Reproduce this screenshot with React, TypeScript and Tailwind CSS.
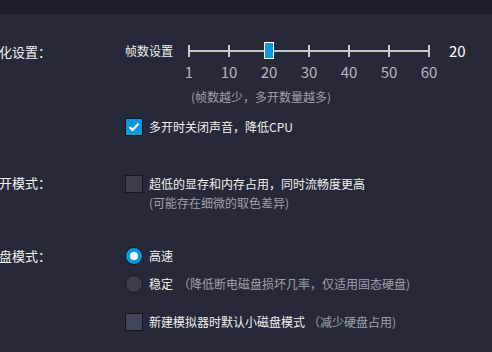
import React from 'react';

const font = { fontFamily: '"Noto Sans CJK SC", "Noto Sans", sans-serif' };

const ticks = [1, 10, 20, 30, 40, 50, 60];

const Checkbox = ({ checked, light }: { checked?: boolean; light?: boolean }) => (
    <div
        className={`w-[18px] h-[18px] shrink-0 border-[1.5px] border-[#15161c] flex items-center justify-center ${
            checked ? 'bg-[#0a98df]' : light ? 'bg-[#41455a]' : 'bg-[#3a3d4c]'
        }`}
    >
        {checked && (
            <svg width="12" height="10" viewBox="0 0 12 10">
                <path d="M1.5 5 L4.5 8 L10.5 1.8" fill="none" stroke="white" strokeWidth="2.2" />
            </svg>
        )}
    </div>
);

const Radio = ({ checked }: { checked?: boolean }) => (
    <div
        className={`w-[18px] h-[18px] shrink-0 rounded-full border-[1.5px] border-[#15161c] flex items-center justify-center ${
            checked ? 'bg-[#0a98df]' : 'bg-[#3a3d4c]'
        }`}
    >
        {checked && <div className="w-[8px] h-[8px] rounded-full bg-white"></div>}
    </div>
);

const Label = ({ text }: { text: string }) => (
    <div className="w-[51px] shrink-0 flex justify-end overflow-hidden whitespace-nowrap text-[13px] leading-[18px] text-[#f4f4f4]">
        <span>{text}</span>
    </div>
);

const App = () => {
    return (
        <div className="w-[492px] h-[352px] bg-[#262a38] overflow-hidden" style={font}>
            <div className="h-[14px] bg-[#1c1e26]"></div>

            {/* 帧数 */}
            <div className="flex items-start mt-[28px]">
                <div className="pt-[1px]">
                    <Label text="多开优化设置：" />
                </div>
                <div className="ml-[74px] flex flex-col">
                    <div className="flex items-center h-[17px]">
                        <div className="w-[63px] text-[12px] leading-[16px] text-[#f0f0f0]">帧数设置</div>
                        <div className="relative w-[242px] h-[17px]">
                            <div className="absolute left-0 right-0 top-[8px] h-[2px] bg-[#c8c8c8]"></div>
                            <div className="absolute inset-x-0 top-[3px] h-[12px] flex justify-between">
                                {ticks.map((t) => (
                                    <div key={t} className="w-[2px] h-[12px] bg-[#c8c8c8]"></div>
                                ))}
                            </div>
                            <div className="absolute left-[76px] top-0 w-[10px] h-[17px] bg-[#0a98df] border border-white"></div>
                        </div>
                        <div className="ml-[19px] text-[15px] leading-[16px] text-white">20</div>
                    </div>
                    <div className="flex ml-[44px] mt-[5px] h-[16px]">
                        {ticks.map((t) => (
                            <div key={t} className="w-[40px] text-center text-[15px] leading-[16px] text-[#b4b6bc]">
                                {t}
                            </div>
                        ))}
                    </div>
                    <div className="ml-[66px] mt-[9px] text-[12px] leading-[16px] text-[#9ea1aa] whitespace-nowrap">
                        (帧数越少，多开数量越多)
                    </div>
                    <div className="flex items-center gap-[6px] mt-[13px]">
                        <Checkbox checked />
                        <span className="text-[12px] leading-[16px] text-[#f0f0f0] whitespace-nowrap">多开时关闭声音，降低CPU</span>
                    </div>
                </div>
            </div>

            {/* 低配模式 */}
            <div className="flex items-start mt-[39px]">
                <div className="-mt-[1px]">
                    <Label text="极速多开模式：" />
                </div>
                <div className="ml-[74px] flex flex-col">
                    <div className="flex items-center gap-[6px]">
                        <Checkbox />
                        <span className="text-[12px] leading-[16px] text-[#f0f0f0] whitespace-nowrap">
                            超低的显存和内存占用，同时流畅度更高
                        </span>
                    </div>
                    <div className="ml-[24px] mt-[2px] text-[12px] leading-[16px] text-[#9ea1aa] whitespace-nowrap">
                        (可能存在细微的取色差异)
                    </div>
                </div>
            </div>

            {/* 磁盘模式 */}
            <div className="flex items-start mt-[36px]">
                <Label text="磁盘模式：" />
                <div className="ml-[74px] flex flex-col">
                    <div className="flex items-center gap-[6px]">
                        <Radio checked />
                        <span className="text-[12px] leading-[16px] text-[#f0f0f0]">高速</span>
                    </div>
                    <div className="flex items-center gap-[6px] mt-[10px]">
                        <Radio />
                        <span className="text-[12px] leading-[16px] text-[#f0f0f0] whitespace-nowrap">
                            稳定
                            <span className="ml-[5px] text-[#9ea1aa]">（降低断电磁盘损坏几率，仅适用固态硬盘)</span>
                        </span>
                    </div>
                    <div className="flex items-center gap-[6px] mt-[20px]">
                        <Checkbox light />
                        <span className="text-[12px] leading-[16px] text-[#f0f0f0] whitespace-nowrap">
                            新建模拟器时默认小磁盘模式
                            <span className="ml-[3px] text-[#9ea1aa]">（减少硬盘占用)</span>
                        </span>
                    </div>
                </div>
            </div>
        </div>
    );
};

export default App;
